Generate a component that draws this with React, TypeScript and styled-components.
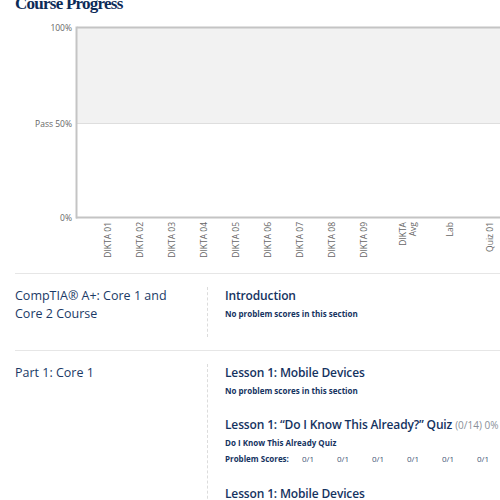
import React from "react";
import styled, { createGlobalStyle } from "styled-components";

const Global = createGlobalStyle`
  html, body { margin: 0; padding: 0; background: #fff; }
  body { font-family: "Open Sans", "Liberation Sans", sans-serif; overflow: hidden; }
`;

const Page = styled.div`
  width: 500px;
  height: 500px;
  overflow: hidden;
  padding-left: 15px;
  box-sizing: border-box;
`;

const Title = styled.h2`
  margin: -7px 0 0 0;
  font-family: "Liberation Serif", "DejaVu Serif", serif;
  font-weight: 700;
  font-size: 17px;
  letter-spacing: -0.75px;
  line-height: 22px;
  color: #0c2b57;
  white-space: nowrap;
`;

const ChartSvg = styled.svg`
  display: block;
  margin-left: -15px;
  width: 500px;
  height: 255px;
  font-family: "Open Sans", "Liberation Sans", sans-serif;
`;

const Sections = styled.div`
  margin-top: 3px;
  width: 560px;
`;

const Row = styled.div`
  display: grid;
  grid-template-columns: 192px 1fr;
  border-top: 1px solid #e6e6e6;
  padding: 13px 0 13px 0;
`;

const RowTitle = styled.div`
  font-size: 12.5px;
  line-height: 18px;
  color: #1b3a66;
  padding-right: 20px;
`;

const RowBody = styled.div`
  border-left: 1px dashed #dcdcdc;
  padding-left: 17px;
  padding-bottom: 16px;
`;

const Block = styled.div<{ $gap?: number }>`
  margin-bottom: ${(p) => p.$gap ?? 0}px;
`;

const Heading = styled.div`
  font-size: 12px;
  font-weight: 600;
  letter-spacing: -0.15px;
  line-height: 18px;
  color: #15335f;
  white-space: nowrap;
`;

const Light = styled.span`
  font-size: 10px;
  font-weight: 400;
  letter-spacing: 0;
  color: #8a8f98;
`;

const Note = styled.div<{ $mt?: number }>`
  margin-top: ${(p) => p.$mt ?? 0}px;
  font-size: 8px;
  font-weight: 700;
  line-height: 14px;
  color: #15335f;
  white-space: nowrap;
`;

const Scores = styled.div`
  display: flex;
  margin-top: 2px;
  font-size: 8px;
  line-height: 14px;
  white-space: nowrap;
`;

const ScoreLabel = styled.span`
  font-weight: 700;
  color: #15335f;
  width: 77px;
`;

const Score = styled.span`
  width: 35px;
  color: #3e5275;
`;

const labels = [
  "DIKTA 01",
  "DIKTA 02",
  "DIKTA 03",
  "DIKTA 04",
  "DIKTA 05",
  "DIKTA 06",
  "DIKTA 07",
  "DIKTA 08",
  "DIKTA 09",
];

// svg origin is page y = 15
const Y = (py: number) => py - 15;

function Chart() {
  const axisColor = "#c4c4c4";
  const textColor = "#666666";
  return (
    <ChartSvg viewBox="0 0 500 255">
      <rect x={77} y={Y(28)} width={440} height={Y(123) - Y(28)} fill="#f2f2f2" />
      <line x1={77} x2={520} y1={Y(123.5)} y2={Y(123.5)} stroke="#dedede" strokeWidth={1} />
      <line x1={77} x2={520} y1={Y(27.5)} y2={Y(27.5)} stroke={axisColor} strokeWidth={2} />
      <line x1={76.5} x2={76.5} y1={Y(26.5)} y2={Y(218.5)} stroke={axisColor} strokeWidth={2} />
      <line x1={76} x2={520} y1={Y(217.5)} y2={Y(217.5)} stroke={axisColor} strokeWidth={2} />
      <g fontSize={8.5} fill={textColor} textAnchor="end">
        <text x={72} y={Y(31)}>100%</text>
        <text x={72} y={Y(127)}>Pass 50%</text>
        <text x={72} y={Y(221)}>0%</text>
      </g>
      <g fontSize={8.5} fill={textColor} textAnchor="end">
        {labels.map((l, i) => {
          const x = 111 + i * 32;
          const y = Y(222);
          return (
            <text key={l} x={x} y={y} transform={`rotate(-90 ${x} ${y})`}>
              {l}
            </text>
          );
        })}
        <text x={406} y={Y(222)} transform={`rotate(-90 406 ${Y(222)})`}>DIKTA</text>
        <text x={416} y={Y(222)} transform={`rotate(-90 416 ${Y(222)})`}>Avg</text>
        <text x={453} y={Y(222)} transform={`rotate(-90 453 ${Y(222)})`}>Lab</text>
        <text x={493} y={Y(222)} transform={`rotate(-90 493 ${Y(222)})`}>Quiz 01</text>
      </g>
    </ChartSvg>
  );
}

export default function App() {
  return (
    <Page>
      <Global />
      <Title>Course Progress</Title>
      <Chart />
      <Sections>
        <Row>
          <RowTitle>
            CompTIA® A+: Core 1 and
            <br />
            Core 2 Course
          </RowTitle>
          <RowBody>
            <Block>
              <Heading>Introduction</Heading>
              <Note $mt={2}>No problem scores in this section</Note>
            </Block>
          </RowBody>
        </Row>
        <Row>
          <RowTitle>Part 1: Core 1</RowTitle>
          <RowBody>
            <Block $gap={18}>
              <Heading>Lesson 1: Mobile Devices</Heading>
              <Note $mt={2}>No problem scores in this section</Note>
            </Block>
            <Block $gap={19}>
              <Heading>
                Lesson 1: “Do I Know This Already?” Quiz <Light>(0/14) 0%</Light>
              </Heading>
              <Note $mt={2}>Do I Know This Already Quiz</Note>
              <Scores>
                <ScoreLabel>Problem Scores:</ScoreLabel>
                {Array.from({ length: 7 }).map((_, i) => (
                  <Score key={i}>0/1</Score>
                ))}
              </Scores>
            </Block>
            <Block>
              <Heading>Lesson 1: Mobile Devices</Heading>
            </Block>
          </RowBody>
        </Row>
      </Sections>
    </Page>
  );
}
